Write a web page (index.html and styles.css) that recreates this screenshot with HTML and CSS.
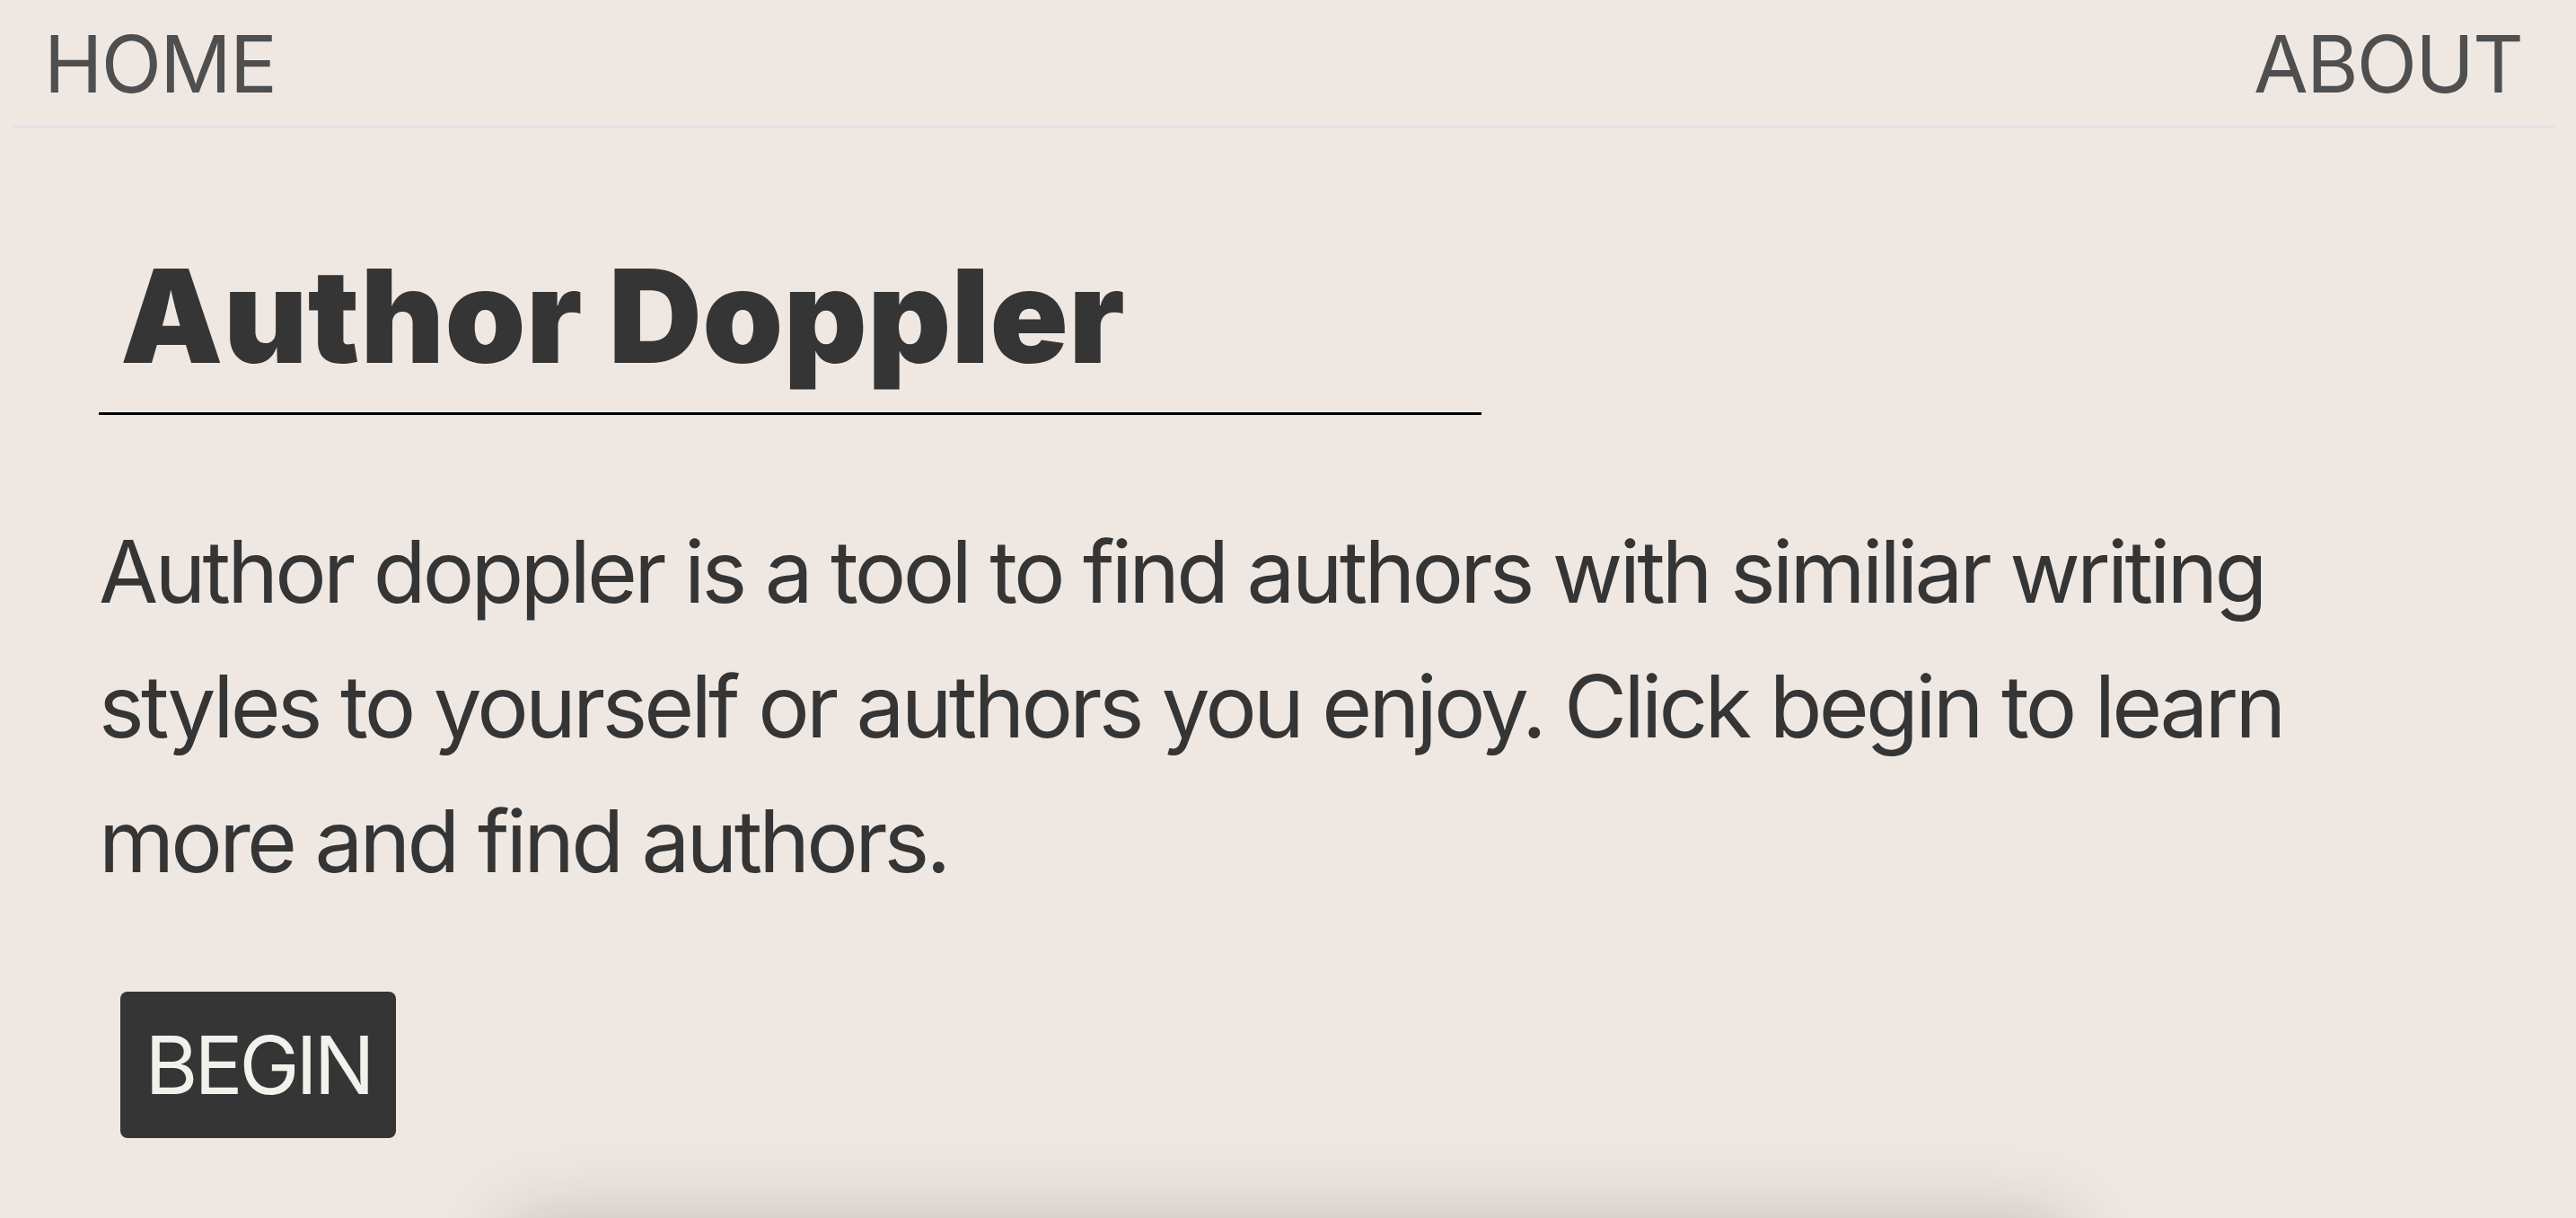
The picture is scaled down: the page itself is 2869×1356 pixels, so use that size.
FILE: index.html
```html
<!DOCTYPE html>
<html lang="en">
<head>
<meta charset="utf-8">
<title>Author Doppler</title>
<link rel="stylesheet" href="styles.css">
</head>
<body>
<nav class="topnav">
  <a class="nav-link" href="#">HOME</a>
  <a class="nav-link" href="#">ABOUT</a>
</nav>
<main class="hero">
  <h1 class="title">Author Doppler</h1>
  <p class="intro">Author doppler is a tool to find authors with similiar writing styles to yourself or authors you enjoy. Click begin to learn more and find authors.</p>
  <button class="begin" type="button">BEGIN</button>
</main>
<section class="panel"></section>
</body>
</html>
```

FILE: styles.css
```css
html {
  overflow: hidden;
}

body {
  margin: 0;
  background: #efe8e2;
  font-family: Inter, "Noto Sans", sans-serif;
  color: #353535;
}

.topnav {
  display: flex;
  justify-content: space-between;
  margin: 0 23px 0 14px;
  padding: 27px 37px 25px 35px;
  border-bottom: 2px solid #dfe2e6;
  font-size: 88px;
  line-height: 1;
}

.nav-link {
  color: #4f4f4f;
  text-decoration: none;
  letter-spacing: -0.02em;
}

.hero {
  padding: 0 0 0 110px;
}

.title {
  margin: 138px 0 0;
  width: 1540px;
  box-sizing: border-box;
  padding: 0 0 35px 24px;
  border-bottom: 3px solid #000;
  font-size: 144px;
  font-weight: 900;
  line-height: 1;
  letter-spacing: 0.003em;
  color: #353535;
}

.intro {
  margin: 99px 0 0;
  max-width: 2560px;
  font-size: 96px;
  line-height: 150px;
  letter-spacing: -0.039em;
}

.begin {
  display: block;
  margin: 93px 0 0 24px;
  width: 307px;
  height: 163px;
  padding: 0;
  border: 0;
  border-radius: 8px;
  background: #353535;
  color: #f3f1ec;
  font-family: Inter, "Noto Sans", sans-serif;
  font-size: 90px;
  letter-spacing: -0.045em;
}

.panel {
  margin: 91px auto 0;
  width: 1735px;
  height: 600px;
  background: #efe8e2;
  box-shadow: 0 0 80px rgba(0, 0, 0, 0.2);
}
```
